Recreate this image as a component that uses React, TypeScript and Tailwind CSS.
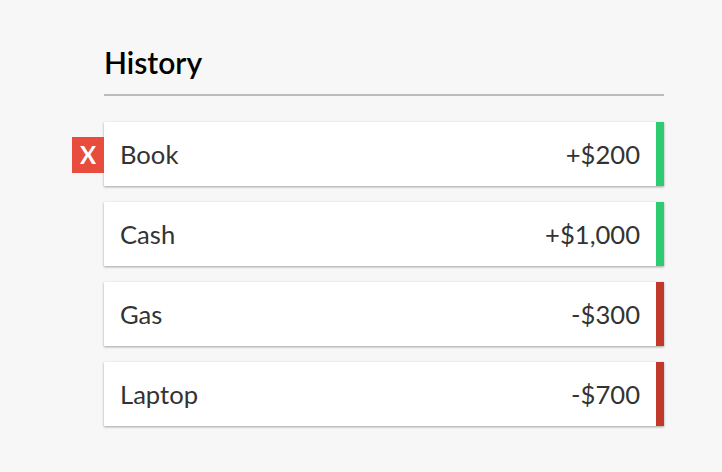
const items = [
  { text: "Book", amount: "+$200", plus: true },
  { text: "Cash", amount: "+$1,000", plus: true },
  { text: "Gas", amount: "-$300", plus: false },
  { text: "Laptop", amount: "-$700", plus: false },
];

export default function App() {
  return (
    <div
      className="min-h-[472px] bg-[#f7f7f7] text-[#333]"
      style={{ fontFamily: "Lato, 'Open Sans', sans-serif" }}
    >
      <div className="ml-[104px] w-[560px] pt-[44px]">
        <h3 className="border-b-2 border-[#bbb] pb-[14px] text-[30px] leading-[36px] font-semibold text-black">
          History
        </h3>
        <ul className="mt-[26px]">
          {items.map((item, i) => (
            <li
              key={item.text}
              className={`relative mb-[16px] flex h-[64px] items-center justify-between bg-white pl-[16px] pr-[16px] text-[25.6px] shadow-[0_1px_3px_rgba(0,0,0,0.12),0_1px_2px_rgba(0,0,0,0.24)] border-r-[8px] ${
                item.plus ? "border-[#2ecc71]" : "border-[#c0392b]"
              }`}
            >
              {i === 0 && (
                <button className="absolute left-[-32px] top-[15px] flex h-[36px] w-[32px] items-center justify-center bg-[#e74c3c] text-[24px] font-bold leading-none text-white">
                  X
                </button>
              )}
              <span>{item.text}</span>
              <span>{item.amount}</span>
            </li>
          ))}
        </ul>
      </div>
    </div>
  );
}
